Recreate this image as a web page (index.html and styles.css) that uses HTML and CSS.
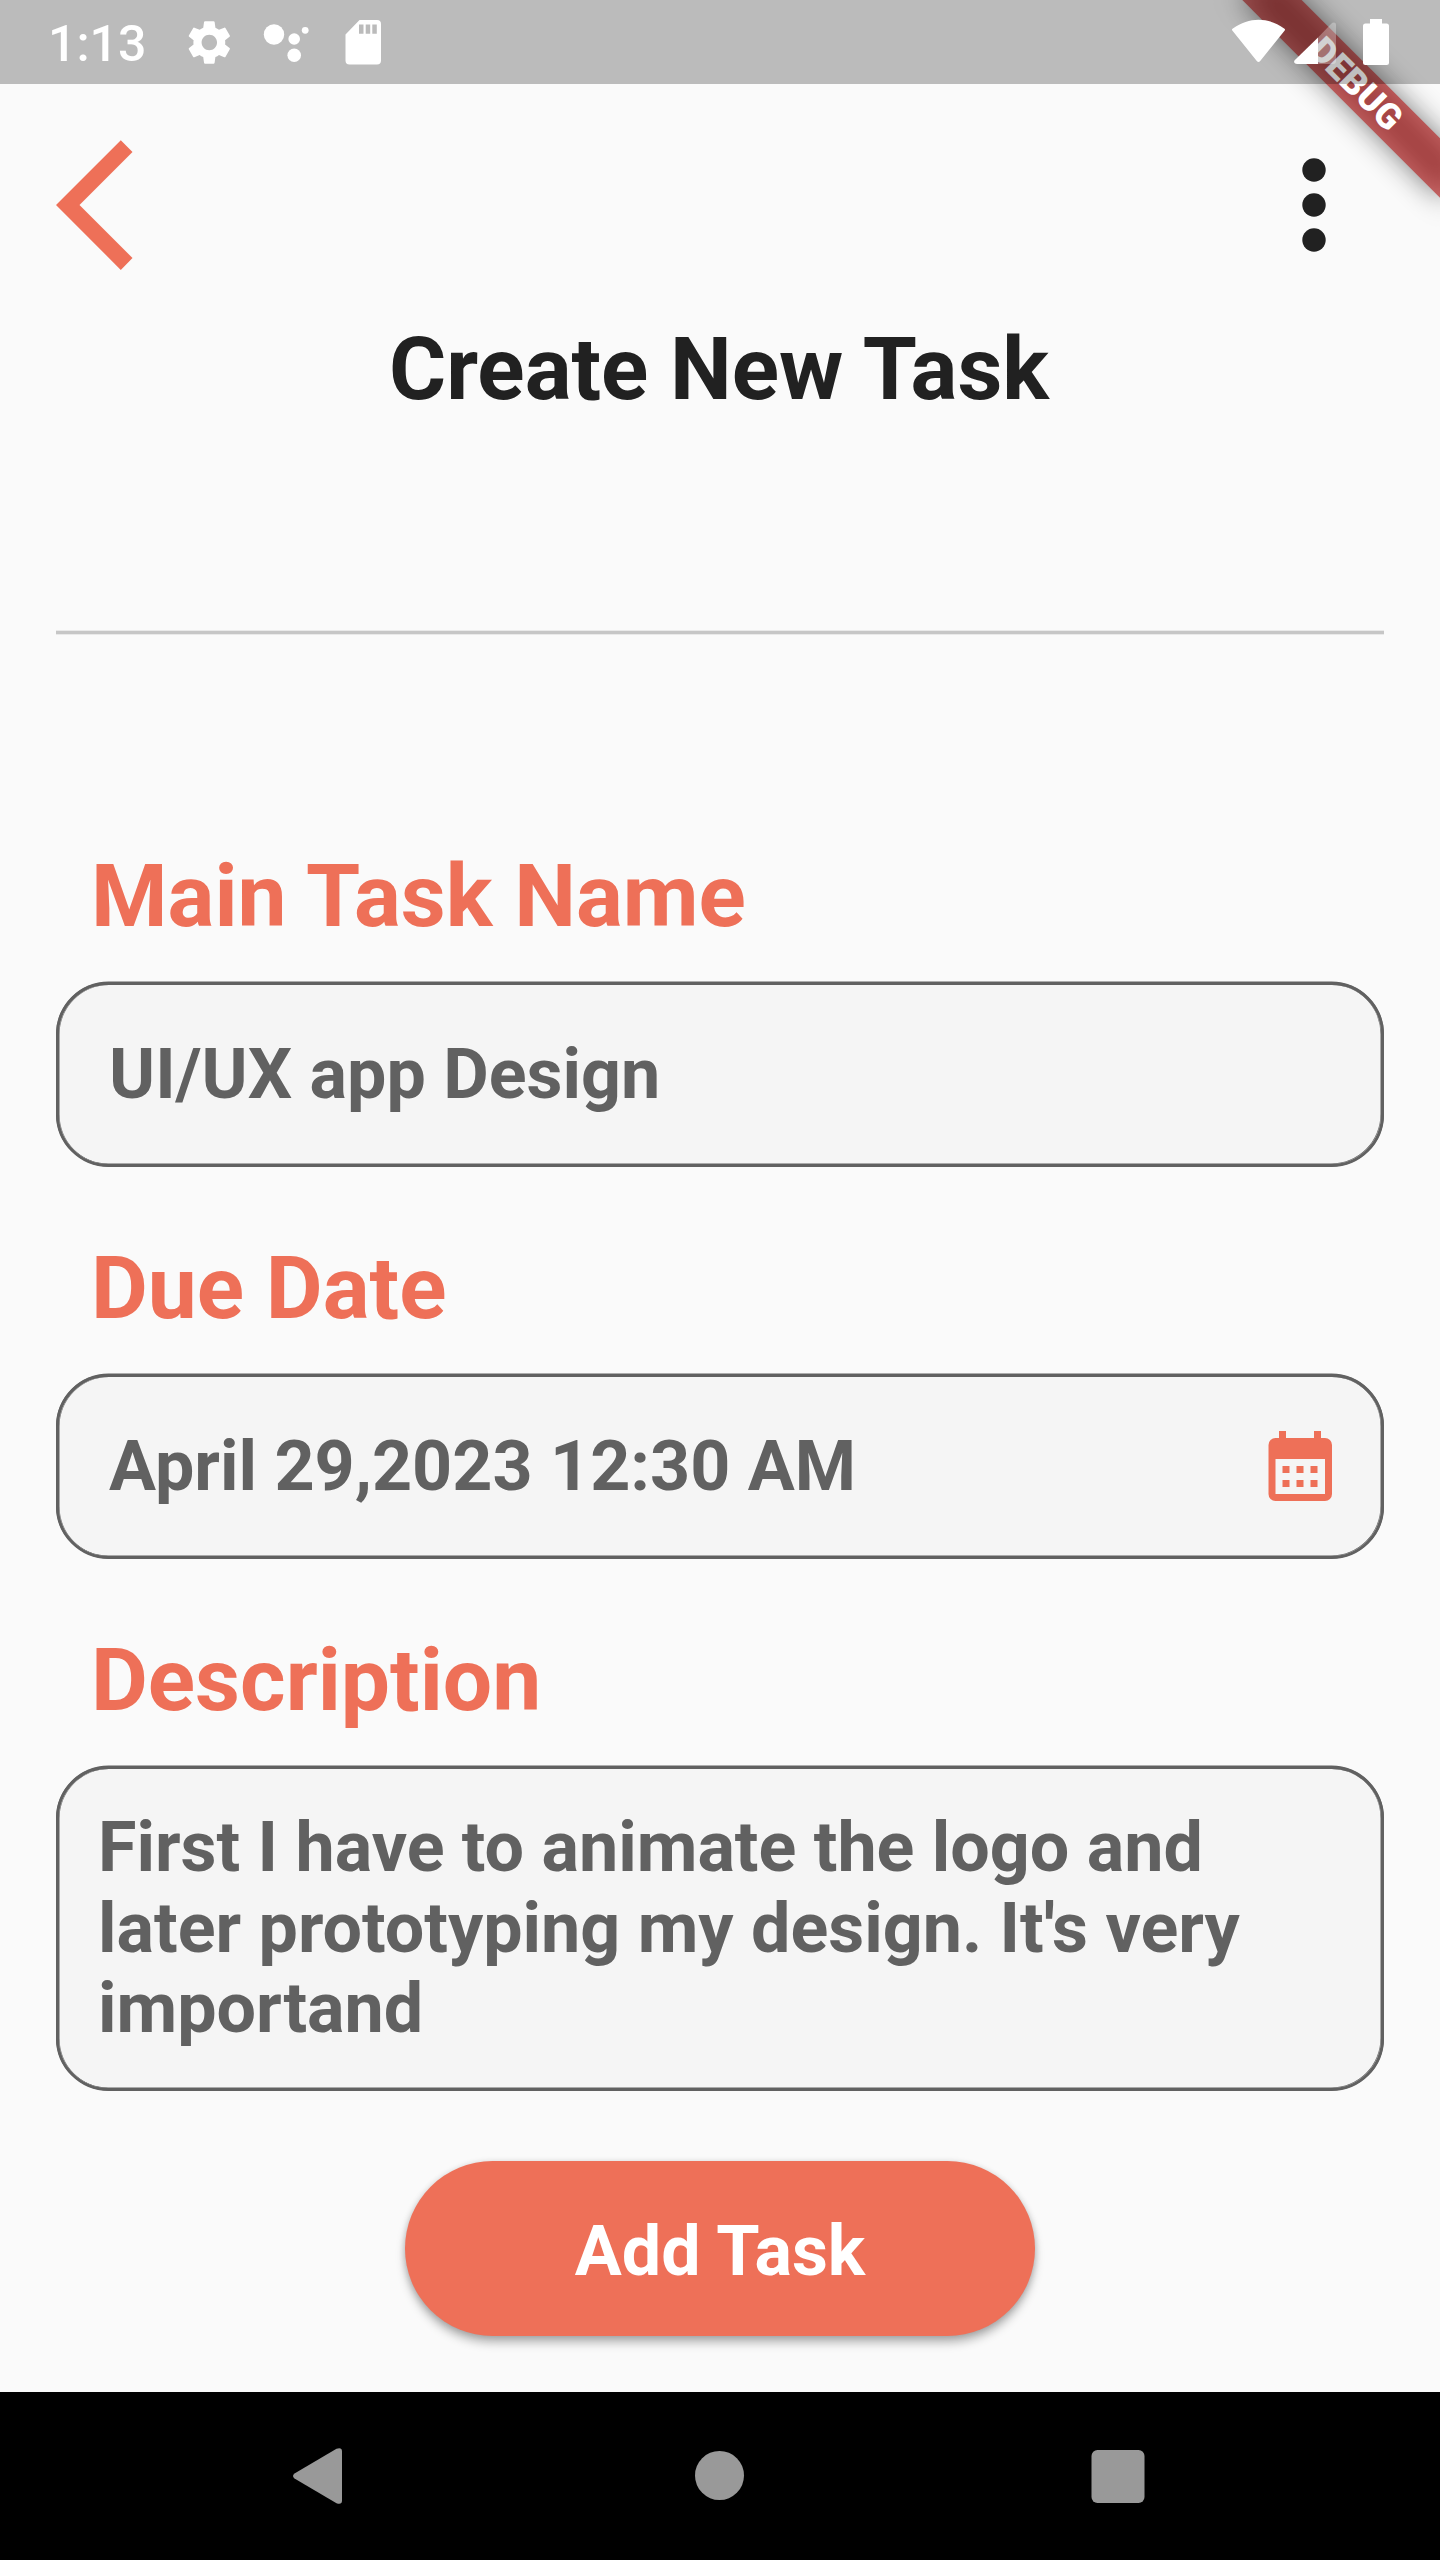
FILE: index.html
```html
<!DOCTYPE html>
<html lang="en">
<head>
<meta charset="utf-8">
<title>Create New Task</title>
<link rel="stylesheet" href="styles.css">
</head>
<body>
<div class="screen">
  <div class="debug-banner"><span>DEBUG</span></div>
  <header class="status-bar">
    <span class="clock">1:13</span>
    <svg class="status-left" width="196" height="84" viewBox="186 0 196 84" fill="#fff">
      <g transform="translate(182.8 15.9) scale(2.21)">
        <path d="M19.14 12.94c.04-.3.06-.61.06-.94 0-.32-.02-.64-.07-.94l2.03-1.58c.18-.14.23-.41.12-.61l-1.92-3.32c-.12-.22-.37-.29-.59-.22l-2.39.96c-.5-.38-1.03-.7-1.62-.94l-.36-2.54c-.04-.24-.24-.41-.48-.41h-3.84c-.24 0-.43.17-.47.41l-.36 2.54c-.59.24-1.13.57-1.62.94l-2.39-.96c-.22-.08-.47 0-.59.22L2.74 8.87c-.12.21-.08.47.12.61l2.03 1.58c-.05.3-.09.63-.09.94s.02.64.07.94l-2.03 1.58c-.18.14-.23.41-.12.61l1.92 3.32c.12.22.37.29.59.22l2.39-.96c.5.38 1.03.7 1.62.94l.36 2.54c.05.24.24.41.48.41h3.84c.24 0 .44-.17.47-.41l.36-2.54c.59-.24 1.13-.56 1.62-.94l2.39.96c.22.08.47 0 .59-.22l1.92-3.32c.12-.22.07-.47-.12-.61l-2.01-1.58zM12 15.5c-1.93 0-3.5-1.57-3.5-3.5s1.57-3.5 3.5-3.5 3.5 1.57 3.5 3.5-1.57 3.5-3.5 3.5z"/>
      </g>
      <circle cx="274" cy="34.5" r="10.2"/><circle cx="294.2" cy="39" r="5.8"/><circle cx="305.2" cy="30.3" r="3.4"/><circle cx="294.2" cy="55.3" r="6.8"/>
      <path fill-rule="evenodd" d="M359.500 20H377a4 4 0 0 1 4 4v36.500a4 4 0 0 1-4 4h-27.500a4 4 0 0 1-4-4V34.500zM359 24.500v9.300h4.500v-9.300zM365.700 24.500v9.300h4.500v-9.300zM372.300 24.500v9.300h4.500v-9.300z"/>
    </svg>
    <svg class="status-right" width="164" height="84" viewBox="1230 0 164 84" fill="#fff">
      <path d="M1232.500 30.800a1.500 1.500 0 0 1 .4-2.300C1241 22.500 1250 19.700 1258.500 19.700s17.500 2.800 25.600 8.800a1.500 1.500 0 0 1 .4 2.300l-24.300 30.200q-1.700 1.900-3.400 0z"/>
      <path fill-opacity=".3" d="M1318 37.500l13-13.500c2-2 5-2 5 1v36q0 3-3 3h-15z"/>
      <path d="M1318 37.500V64h-21c-3 0-3.500-2.500-2.300-3.700z"/>
      <path d="M1370 19h12v4.500h4.500q2.500 0 2.500 2.500v36.500q0 2.500-2.500 2.500h-21q-2.500 0-2.500-2.500V26q0-2.500 2.500-2.500h4.500z"/>
    </svg>
  </header>

  <main class="content">
    <nav class="toolbar">
      <svg width="77" height="130" viewBox="56 140 77 130"><path fill="#ee7058" d="M120.800 140.300L132.500 152 79.500 205l53 53-11.700 11.900L56 205z"/></svg>
      <svg width="24" height="94" viewBox="0 0 24 94" fill="#212121"><circle cx="12" cy="12" r="11.700"/><circle cx="12" cy="47" r="11.700"/><circle cx="12" cy="82" r="11.700"/></svg>
    </nav>
    <h1 class="title">Create New Task</h1>
    <hr class="divider">

    <section class="group">
      <h2 class="label">Main Task Name</h2>
      <div class="field"><span>UI/UX app Design</span></div>
    </section>
    <section class="group">
      <h2 class="label">Due Date</h2>
      <div class="field">
        <span>April 29,2023 12:30 AM</span>
        <svg width="64" height="70" viewBox="0 0 64 70" fill="#ee7058"><path fill-rule="evenodd" d="M11 0h7v7h28V0h7v7h4a7 7 0 0 1 7 7v49a7 7 0 0 1-7 7H7.500a7 7 0 0 1-7-7V14a7 7 0 0 1 7-7H11zM7.500 28v35h49.500V28zM14.500 35h7v7h-7zM28.500 35h7v7h-7zM42.500 35h7v7h-7zM14.500 49h7v7h-7zM28.500 49h7v7h-7zM42.500 49h7v7h-7z"/></svg>
      </div>
    </section>
    <section class="group">
      <h2 class="label">Description</h2>
      <div class="field field-area">First I have to animate the logo and<br>later prototyping my design. It's very<br>importand</div>
    </section>
    <button class="submit" type="button">Add Task</button>
  </main>

  <footer class="nav-bar">
    <svg width="50" height="56" viewBox="0 0 50 56" fill="#999"><path d="M1.500 25.500L43.500.8Q49 -1 49 3.500v49q0 4.500-5.500 2.700L1.500 30.500q-3-2.500 0-5z"/></svg>
    <svg class="nav-home" width="50" height="50" viewBox="0 0 50 50" fill="#999"><circle cx="24.500" cy="24.500" r="24.500"/></svg>
    <svg class="nav-recent" width="54" height="53" viewBox="0 0 54 53" fill="#999"><rect x=".5" width="53" height="53" rx="6"/></svg>
  </footer>
</div>
</body>
</html>
```
FILE: styles.css
```css
* { box-sizing: border-box; margin: 0; }
body { font-family: Roboto, "Liberation Sans", sans-serif; font-weight: 700; }
svg { display: block; flex: none; }

.screen {
  position: relative;
  width: 1440px;
  height: 2560px;
  overflow: hidden;
  display: flex;
  flex-direction: column;
  background: #fafafa;
}

/* Translucent scrim lies over the corner banner */
.status-bar {
  position: relative;
  z-index: 2;
  flex: none;
  height: 84px;
  display: flex;
  align-items: center;
  padding: 0 46px 0 48px;
  background: rgba(0, 0, 0, .25);
  color: #fff;
}
.clock { width: 138px; font-size: 50px; font-weight: 500; line-height: 84px; padding-top: 4px; }
.status-right { margin-left: auto; }

.debug-banner {
  position: absolute;
  z-index: 1;
  top: 63.15px;
  right: -55.85px;
  width: 280px;
  height: 42px;
  transform: rotate(45deg);
  color: #fff;
  text-align: center;
  font-size: 35.7px;
  font-weight: 900;
  line-height: 42px;
}
/* The shadow also shows through the translucent ribbon */
.debug-banner::before {
  content: "";
  position: absolute;
  inset: 0;
  background: rgba(0, 0, 0, .5);
  filter: blur(13.9px);
}
.debug-banner span {
  position: relative;
  display: block;
  height: 42px;
  background: rgba(183, 28, 28, .627);
}

.content {
  flex: 1;
  display: flex;
  flex-direction: column;
  padding: 56px 56px 0;
}
.toolbar {
  height: 130px;
  display: flex;
  align-items: center;
  justify-content: space-between;
  padding-right: 58px;
}
.title {
  margin: 48px 2px 0 0;
  font-size: 87.5px;
  line-height: 103px;
  text-align: center;
  color: #212121;
}
.divider {
  flex: none;
  height: 3px;
  margin: 210px 0 0;
  border: 0;
  background: #c6c6c6;
  box-shadow: 0 1px 0 #e9e9e9, 0 -1px 0 #e9e9e9;
}

.group { display: flex; flex-direction: column; padding-top: 70px; }
.divider + .group { margin-top: 141px; }
.label { padding-left: 35px; height: 137px; font-size: 87.5px; line-height: 103px; color: #ee7058; }
.field {
  height: 185px;
  display: flex;
  align-items: center;
  justify-content: space-between;
  padding: 0 49px 1px 50px;
  border: 3px solid #616161;
  border-radius: 52.5px;
  background: #f5f5f5;
  box-shadow: 0 -.5px 0 #616161, inset .5px 0 0 #616161, inset -.5px -.5px 0 #616161;
  font-size: 70px;
  line-height: 82px;
  color: #616161;
}
.field-area { display: block; height: 325px; padding: 38px 39px; line-height: 80.5px; }

.submit {
  align-self: center;
  width: 630px;
  height: 175px;
  margin-top: 70px;
  padding: 4px 0 0;
  border: 0;
  border-radius: 87.5px;
  background: #ee7058;
  box-shadow: 0 7px 10px rgba(0, 0, 0, .26), 0 1px 6px rgba(0, 0, 0, .16);
  color: #fff;
  font: 700 70px/82px Roboto, "Liberation Sans", sans-serif;
}

.nav-bar {
  flex: none;
  height: 168px;
  display: flex;
  align-items: center;
  padding-left: 293px;
  background: #000;
}
.nav-home { margin-left: 352px; }
.nav-recent { margin-left: 346px; }
```
